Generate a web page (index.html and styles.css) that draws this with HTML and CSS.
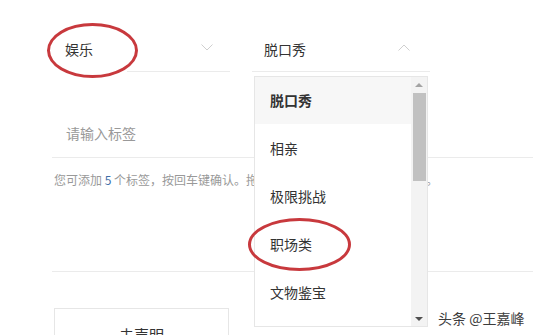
FILE: index.html
```html
<!DOCTYPE html>
<html lang="zh-CN">
<head>
    <meta charset="UTF-8">
    <title>标签设置</title>
    <link rel="stylesheet" href="styles.css">
</head>
<body>
    <div class="page">
        <div class="select-row">
            <div class="select">
                <span class="select-value">娱乐</span>
                <svg class="arrow" width="12" height="7" viewBox="0 0 12 7"><polyline points="0.5,0.5 6,6 11.5,0.5" fill="none" stroke="#cfcfcf" stroke-width="1"/></svg>
            </div>
            <div class="select">
                <span class="select-value">脱口秀</span>
                <svg class="arrow" width="12" height="7" viewBox="0 0 12 7"><polyline points="0.5,6.5 6,1 11.5,6.5" fill="none" stroke="#cfcfcf" stroke-width="1"/></svg>
            </div>
        </div>

        <div class="tag-input">请输入标签</div>
        <p class="hint">您可添加 <span class="hint-num">5</span> 个标签，按回车键确认。拖拽标签可以调整标签的先后顺序。</p>

        <div class="divider"></div>

        <div class="declare-box">未声明</div>
    </div>

    <div class="dropdown">
        <ul class="dropdown-list">
            <li class="dropdown-item active">脱口秀</li>
            <li class="dropdown-item">相亲</li>
            <li class="dropdown-item">极限挑战</li>
            <li class="dropdown-item">职场类</li>
            <li class="dropdown-item">文物鉴宝</li>
        </ul>
        <div class="scrollbar">
            <span class="scroll-arrow up"></span>
            <span class="scroll-thumb"></span>
            <span class="scroll-arrow down"></span>
        </div>
    </div>

    <div class="mark-cover"></div>
    <div class="mark mark-first"></div>
    <div class="mark mark-second"></div>

    <div class="watermark">头条 @王嘉峰</div>
</body>
</html>
```

FILE: styles.css
```css
:root {
    --text-color: #333333;
    --muted-color: #999999;
    --line-color: #ebebeb;
    --mark-color: #c8393d;
    --link-color: #3f6ea8;
}

* {
    margin: 0;
    padding: 0;
    box-sizing: border-box;
}

body {
    font-family: 'Noto Sans CJK SC', 'Liberation Sans', sans-serif;
    background: #ffffff;
    color: var(--text-color);
    width: 533px;
    height: 335px;
    overflow: hidden;
    position: relative;
}

.page {
    padding: 26px 0 0 52px;
}

.select-row {
    display: flex;
    gap: 22px;
}

.select {
    width: 178px;
    height: 46px;
    display: flex;
    align-items: center;
    justify-content: space-between;
    padding: 0 17px 0 13px;
    border-bottom: 1px solid var(--line-color);
}

.select + .select {
    padding: 0 20px 0 12px;
}

.select-value {
    font-size: 14px;
    line-height: 20px;
}

.arrow {
    display: block;
    margin-top: -3px;
}

.tag-input {
    margin-top: 38px;
    height: 48px;
    line-height: 47px;
    padding-left: 14px;
    font-size: 14px;
    color: var(--muted-color);
    border-bottom: 1px solid var(--line-color);
}

.hint {
    margin-top: 13px;
    padding-left: 2px;
    font-size: 12px;
    line-height: 18px;
    color: var(--muted-color);
    white-space: nowrap;
}

.hint-num {
    color: var(--link-color);
}

.divider {
    margin-top: 82px;
    border-top: 1px solid var(--line-color);
}

.declare-box {
    margin: 36px 0 0 2px;
    width: 175px;
    height: 60px;
    padding-top: 16px;
    border: 1px solid #e6e6e6;
    text-align: center;
    font-size: 15px;
    line-height: 20px;
}

.dropdown {
    position: absolute;
    left: 254px;
    top: 76px;
    width: 174px;
    height: 251px;
    display: flex;
    background: #ffffff;
    border: 1px solid #e6e6e6;
}

.dropdown-list {
    list-style: none;
    flex: 1;
}

.dropdown-item {
    height: 48px;
    line-height: 48px;
    padding-left: 15px;
    font-size: 14px;
}

.dropdown-item.active {
    height: 47px;
    line-height: 47px;
    font-weight: bold;
    background: #f7f7f7;
}

.scrollbar {
    width: 16px;
    background: #f3f3f3;
    display: flex;
    flex-direction: column;
    align-items: center;
    padding: 6px 0 5px;
}

.scroll-arrow {
    width: 0;
    height: 0;
    border-left: 4px solid transparent;
    border-right: 4px solid transparent;
}

.scroll-arrow.up {
    border-bottom: 4px solid #a3a3a3;
}

.scroll-arrow.down {
    margin-top: auto;
    border-top: 4px solid #505050;
}

.scroll-thumb {
    margin-top: 6px;
    width: 13px;
    height: 88px;
    background: #c1c1c1;
}

.mark-cover {
    position: absolute;
    left: 44px;
    top: 66px;
    width: 83px;
    height: 8px;
    background: #ffffff;
}

.mark {
    position: absolute;
    border: 3px solid var(--mark-color);
    border-radius: 50%;
}

.mark-first {
    left: 47px;
    top: 23px;
    width: 91px;
    height: 55px;
}

.mark-second {
    left: 248px;
    top: 218px;
    width: 103px;
    height: 53px;
}

.watermark {
    position: absolute;
    left: 438px;
    top: 309px;
    font-size: 14px;
    line-height: 18px;
    color: #3c3c3c;
    text-shadow: 0 0 2px #ffffff;
}
```
